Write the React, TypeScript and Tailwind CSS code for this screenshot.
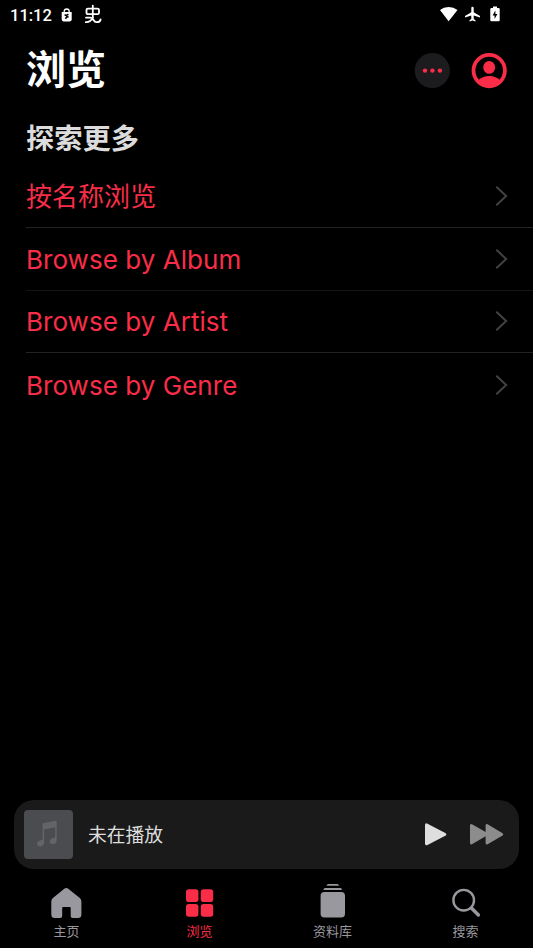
import { useState } from 'react';
import type { ReactNode } from 'react';

interface BrowseItem {
  id: string;
  label: string;
}

interface TabItem {
  id: string;
  label: string;
  icon: ReactNode;
}

const browseItems: BrowseItem[] = [
  { id: 'name', label: '按名称浏览' },
  { id: 'album', label: 'Browse by Album' },
  { id: 'artist', label: 'Browse by Artist' },
  { id: 'genre', label: 'Browse by Genre' },
];

const HomeIcon = () => (
  <svg width="32" height="32" viewBox="0 0 32 32" fill="currentColor">
    <path d="M13.3 1.8Q15.3.2 17.3 1.8L28.8 11Q30.4 12.4 30.4 14.4V27.5Q30.4 31 26.9 31H21.6Q19.7 31 19.7 29V21Q19.7 20 18.7 20H12.2Q11.2 20 11.2 21V29Q11.2 31 9.2 31H3.8Q.3 31 .3 27.5V14.4Q.3 12.4 1.9 11Z" />
  </svg>
);

const BrowseIcon = () => (
  <svg width="32" height="32" viewBox="0 0 32 32" fill="currentColor">
    <rect x="2" y="2.3" width="12.4" height="12.8" rx="2.8" />
    <rect x="16.8" y="2.3" width="12.4" height="12.8" rx="2.8" />
    <rect x="2" y="17" width="12.4" height="12.8" rx="2.8" />
    <rect x="16.8" y="17" width="12.4" height="12.8" rx="2.8" />
  </svg>
);

const LibraryIcon = () => (
  <svg width="32" height="36" viewBox="0 0 32 36" fill="currentColor" className="mb-1">
    <path d="M11.3 1H20.3Q21.6 1 22.1 2.8H9.5Q10 1 11.3 1Z" />
    <path d="M8 4.9H23.4Q24.6 4.9 25.1 6.9H6.3Q6.8 4.9 8 4.9Z" />
    <rect x="3.6" y="9" width="24.4" height="25.6" rx="3.8" />
  </svg>
);

const SearchIcon = () => (
  <svg width="32" height="32" viewBox="0 0 32 32" fill="none" stroke="currentColor" strokeLinecap="round">
    <circle cx="13.7" cy="13.2" r="10.3" strokeWidth="2.4" />
    <path d="M21.4 21L28.4 28" strokeWidth="3.4" />
  </svg>
);

const tabs: TabItem[] = [
  { id: 'home', label: '主页', icon: <HomeIcon /> },
  { id: 'browse', label: '浏览', icon: <BrowseIcon /> },
  { id: 'library', label: '资料库', icon: <LibraryIcon /> },
  { id: 'search', label: '搜索', icon: <SearchIcon /> },
];

function StatusBar() {
  return (
    <div className="flex h-[30px] items-center justify-between pr-[33px] pl-[10px] text-white">
      <div className="flex items-center">
        <span className="w-[51px] pt-px font-['Roboto',sans-serif] text-[16.5px] leading-[29px] font-medium">11:12</span>
        <svg width="12" height="16" viewBox="0 0 12 16" className="mb-px">
          <path d="M3.2 6V4.3Q3.2 2 5.7 2T8.2 4.3V6" fill="none" stroke="white" strokeWidth="1.3" />
          <path d="M.7 4.9H10.7V12.6Q10.7 14.4 8.9 14.4H2.5Q.7 14.4 .7 12.6Z" fill="white" />
          <path d="M3.6 7.6L5.2 8.6L7.4 7.2M7.6 9.6L5.6 10.2L4.4 11.8" fill="none" stroke="black" strokeWidth="1.6" />
        </svg>
        <svg
          width="18"
          height="20"
          viewBox="0 0 18 20"
          className="mt-[-2px] ml-[11px]"
          fill="none"
          stroke="white"
          strokeWidth="1.8"
          strokeLinecap="round"
          strokeLinejoin="round"
        >
          <path d="M8.8 1.6V13.5M4 4.6H13.5Q15 4.6 15 6.1V8.7Q15 10.2 13.5 10.2H4Q2.5 10.2 2.5 8.7V6.1Q2.5 4.6 4 4.6Z" />
          <path d="M2 13.7H6.3Q8.2 13.7 9.5 16T12.8 18.1Q16.2 18.1 16.6 15.5M1.8 18.2Q6.6 18.4 8.8 13.7" />
        </svg>
      </div>
      <div className="flex items-center">
        <svg width="18" height="16" viewBox="0 0 18 16" fill="white" className="mb-[2px]">
          <path d="M8.6 15.3L0 4Q3.6 1 8.6 1T17.5 4Z" />
        </svg>
        <svg width="16" height="16" viewBox="0 0 16 16" className="mb-[2px] ml-[7px]" fill="white">
          <path d="M7.5 .7Q8.7.7 8.7 2V6.2L15 10V11.5L8.7 9.6V13L10.5 14.3V15.4L7.5 14.6L4.5 15.4V14.3L6.3 13V9.6L0 11.5V10L6.3 6.2V2Q6.3.7 7.5 .7Z" />
        </svg>
        <svg width="10" height="16" viewBox="0 0 10 16" className="mb-[2px] ml-[9px]">
          <path d="M3 .5H7V2H8.6Q9.7 2 9.7 3.1V14.2Q9.7 15.3 8.6 15.3H1.4Q.3 15.3 .3 14.2V3.1Q.3 2 1.4 2H3Z" fill="white" />
          <path d="M5.4 4.5V8H7.4L4.6 13V9.6H2.6Z" fill="black" />
        </svg>
      </div>
    </div>
  );
}

function Header() {
  return (
    <header className="flex h-[82px] items-center justify-between pr-[26px] pl-[26px]">
      <h1 className="mb-[2px] text-[40px] leading-[60px] font-bold text-white">浏览</h1>
      <div className="flex items-center gap-[21px] text-[#fa2d48]">
        <button aria-label="更多">
          <svg width="36" height="36" viewBox="0 0 36 36" fill="currentColor" className="block">
            <circle cx="18.3" cy="17.6" r="17.6" fill="#1c1c1e" />
            <circle cx="11" cy="17.6" r="2.2" />
            <circle cx="18.4" cy="17.6" r="2.2" />
            <circle cx="25.9" cy="17.6" r="2.2" />
          </svg>
        </button>
        <button aria-label="账户">
          <svg width="36" height="36" viewBox="0 0 36 36" fill="currentColor" className="block">
            <circle cx="18.2" cy="17.6" r="15.7" fill="none" stroke="currentColor" strokeWidth="3.8" />
            <ellipse cx="18.2" cy="14.4" rx="5.9" ry="6.4" />
            <path d="M7.2 27.5Q11.2 23 18.2 23T29.2 27.5Q25.2 34 18.2 34T7.2 27.5Z" />
          </svg>
        </button>
      </div>
    </header>
  );
}

function BrowseRow({ item, last }: { item: BrowseItem; last: boolean }) {
  return (
    <li
      className={`ml-[26px] flex h-[62.75px] items-center justify-between pr-[25px] ${
        last ? '' : 'border-b border-[#222223] even:border-[#141415]'
      }`}
    >
      <span className="pt-[2px] text-[26px] leading-[40px] tracking-[0.04px] text-[#fa2d48]">{item.label}</span>
      <svg width="13" height="20" viewBox="0 0 13 20" fill="none" stroke="#434345" strokeWidth="1.9">
        <path d="M1.3 .8L11.2 10L1.3 19.2" />
      </svg>
    </li>
  );
}

function MiniPlayer() {
  return (
    <div className="mx-[14px] flex h-[69px] items-center rounded-[20px] bg-[#1a1a1a] pr-[15px] pl-[10px]">
      <div className="flex h-[49px] w-[49px] items-center justify-center rounded-[4px] bg-[#4b4c50] pr-[3px] pb-px">
        <svg width="22" height="28" viewBox="0 0 22 28" fill="#646467">
          <path d="M6.6 4.4Q6.6 3.2 7.8 2.9L19.5.8Q20.7.6 20.7 1.8V20Q20.7 23.8 17.2 24Q13.7 24 13.8 21.2Q14 18.5 17.2 18Q19.2 17.8 19.2 16V7.3L8.1 9.4V22.5Q8 26 4.3 26.4Q1 26.4 1 23.6Q1.2 21 4.5 20.5Q6.6 20.2 6.6 18.5Z" />
        </svg>
      </div>
      <span className="ml-[15px] flex-1 pt-[2px] text-[18.8px] leading-[28px] text-[#dedede]">未在播放</span>
      <button aria-label="播放" className="mb-px text-[#dedede]">
        <svg width="24" height="24" viewBox="0 -0.4 24 24" fill="currentColor" className="block">
          <path d="M2 2.7Q2 .2 4.5 1.3L22.3 10.6Q24.5 12 22.3 13.4L4.5 22.5Q2 23.6 2 21.1Z" />
        </svg>
      </button>
      <button aria-label="下一首" className="mb-px ml-[21px] text-[#8c8c8c]">
        <svg width="36" height="24" viewBox="0 -0.4 36 24" fill="currentColor" className="block">
          <path d="M2 3.2Q2 .9 4 1.8L17.6 9.7V3.2Q17.6 .9 19.6 1.8L34.6 10.8Q36 12 34.6 13.2L19.6 21.8Q17.6 22.8 17.6 20.4V13.9L4 21.8Q2 22.8 2 20.4Z" />
        </svg>
      </button>
    </div>
  );
}

export default function App() {
  const [activeTab, setActiveTab] = useState('browse');

  return (
    <div className="flex h-screen w-full flex-col overflow-hidden bg-black font-['Inter','Noto_Sans_CJK_SC',sans-serif]">
      <StatusBar />
      <Header />

      <main className="flex-1">
        <h2 className="flex h-[53px] items-center pl-[26px] text-[28.25px] leading-[42px] font-bold text-[#dcdcdc]">
          探索更多
        </h2>
        <ul>
          {browseItems.map((item, i) => (
            <BrowseRow key={item.id} item={item} last={i === browseItems.length - 1} />
          ))}
        </ul>
      </main>

      <MiniPlayer />

      {/* タブバー */}
      <nav className="mr-px grid h-[79px] grid-cols-4 pt-[15px]">
        {tabs.map((tab) => (
          <button
            key={tab.id}
            onClick={() => setActiveTab(tab.id)}
            className={`flex flex-col items-center ${
              tab.id === activeTab ? 'text-[#fa2d48]' : 'text-[#98989e]'
            }`}
          >
            <span className="flex h-[37px] items-center">{tab.icon}</span>
            <span className="text-[13px] leading-[20px]">{tab.label}</span>
          </button>
        ))}
      </nav>
    </div>
  );
}
